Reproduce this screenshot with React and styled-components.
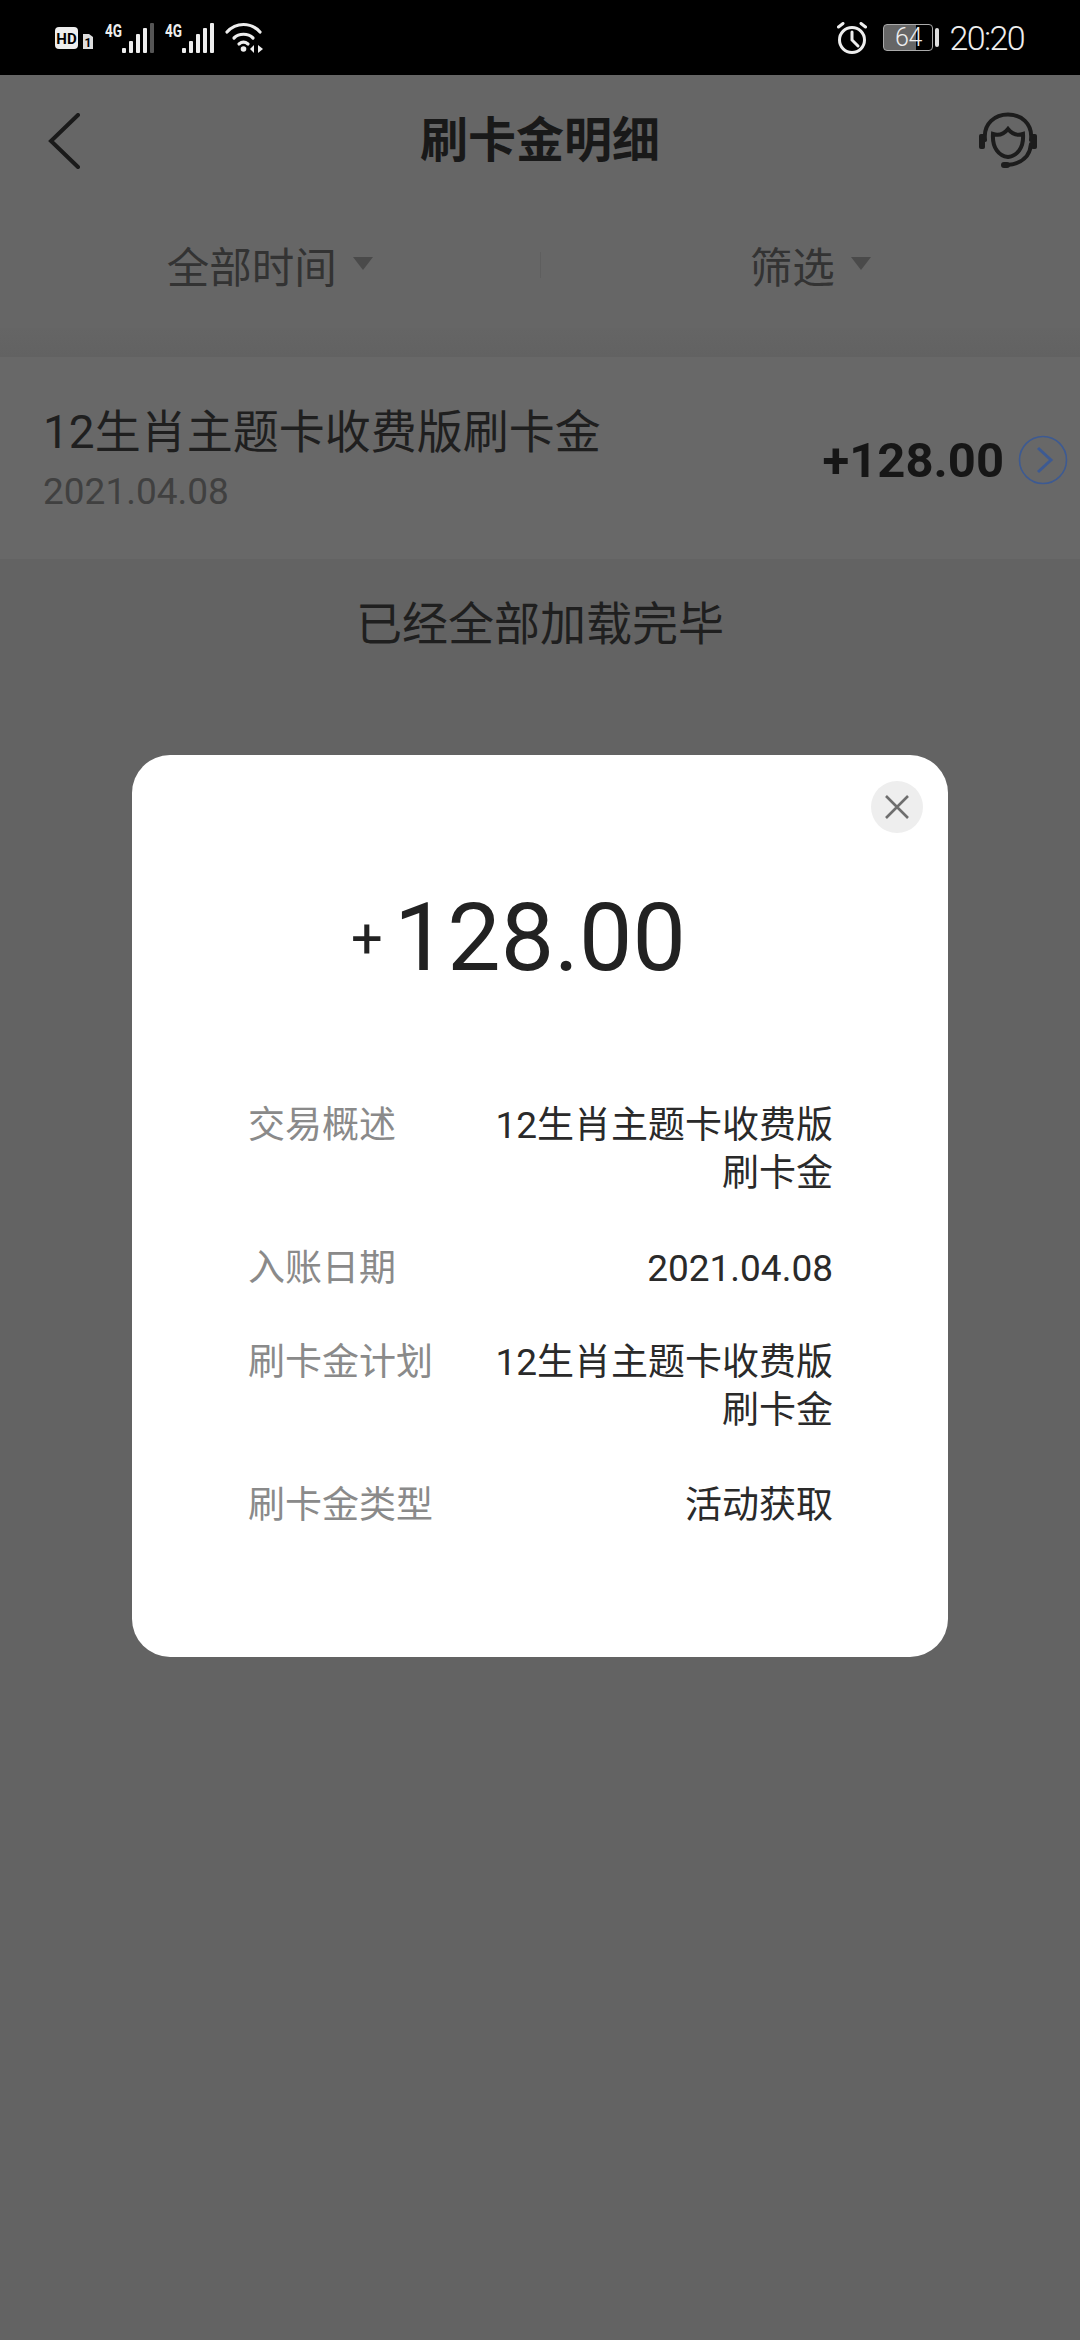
import React from 'react';
import styled, { createGlobalStyle } from 'styled-components';

const Global = createGlobalStyle`
  html, body { margin: 0; padding: 0; background: #636363; }
  * { box-sizing: border-box; }
  body { font-family: Roboto, "Noto Sans CJK SC", sans-serif; }
`;

const Page = styled.div`
  position: relative;
  width: 1080px;
  height: 2340px;
  overflow: hidden;
  background: #636363;
  display: flex;
  flex-direction: column;
`;

const StatusBar = styled.div`
  height: 75px;
  background: #000;
  color: #eee;
  display: flex;
  align-items: center;
  justify-content: space-between;
  padding: 0 56px 0 55px;
`;

const StatusGroup = styled.div`
  display: flex;
  align-items: center;
`;

const SignalGroup = styled(StatusGroup)`
  gap: 10px;
`;

const Clock = styled.span`
  font-size: 34px;
  font-weight: 300;
  letter-spacing: -1.6px;
  line-height: 1;
  margin-left: 10px;
  color: #eee;
`;

const Battery = styled.div`
  width: 50px;
  height: 27px;
  margin-left: 16px;
  border: 1.5px solid #aaa;
  border-radius: 4px;
  display: flex;
  align-items: center;
  justify-content: center;
  font-size: 25px;
  font-weight: 300;
  letter-spacing: -0.5px;
  color: #eee;
  background: linear-gradient(to right, #666 66%, transparent 66%);
`;

const BatteryCap = styled.div`
  width: 4px;
  height: 19px;
  margin-left: 2px;
  border-radius: 2px;
  background: #ddd;
`;

const Header = styled.div`
  height: 132px;
  background: #666;
  display: flex;
  align-items: center;
  justify-content: space-between;
  padding: 0 42px 0 48px;
`;

const Title = styled.h1`
  margin: 0;
  font-size: 48px;
  font-weight: 700;
  color: #191919;
  position: absolute;
  left: 0;
  right: 0;
  text-align: center;
  line-height: 132px;
  top: 75px;
`;

const Filters = styled.div`
  height: 121px;
  background: #666;
  display: flex;
  align-items: center;
  padding-bottom: 6px;
`;

const FilterCell = styled.div`
  flex: 1;
  display: flex;
  align-items: center;
  justify-content: center;
  gap: 16px;
  font-size: 42.5px;
  color: #333;
`;

const Caret = styled.span`
  width: 0;
  height: 0;
  margin-top: -2px;
  border-left: 10px solid transparent;
  border-right: 10px solid transparent;
  border-top: 13px solid #4a4a4a;
`;

const FilterDivider = styled.div`
  width: 1px;
  height: 26px;
  background: #5e5e5e;
`;

const Gap = styled.div`
  height: 29px;
  background: linear-gradient(#656565, #626262);
`;

const Record = styled.div`
  height: 202px;
  background: #686868;
  display: flex;
  align-items: center;
  justify-content: space-between;
  padding: 0 12px 0 43px;
`;

const RecordText = styled.div`
  display: flex;
  flex-direction: column;
  gap: 12px;
`;

const RecordName = styled.div`
  font-size: 46px;
  line-height: 56px;
  color: #1f1f1f;
`;

const RecordDate = styled.div`
  font-size: 37px;
  line-height: 40px;
  color: #404040;
`;

const RecordRight = styled.div`
  display: flex;
  align-items: center;
  gap: 14px;
  margin-top: 4px;
`;

const RecordAmount = styled.div`
  font-size: 49px;
  font-weight: 700;
  color: #161616;
`;

const EndNote = styled.div`
  text-align: center;
  font-size: 46px;
  line-height: 56px;
  margin-top: 37px;
  color: #1f1f1f;
`;

const Backdrop = styled.div`
  position: absolute;
  inset: 75px 0 0 0;
  display: flex;
  justify-content: center;
  padding-top: 680px;
`;

const Modal = styled.div`
  position: relative;
  width: 816px;
  height: 902px;
  background: #fff;
  border-radius: 38px;
  padding: 128px 115px 0 116px;
`;

const Close = styled.div`
  position: absolute;
  top: 26px;
  right: 25px;
  width: 52px;
  height: 52px;
  border-radius: 50%;
  background: #eee;
  display: flex;
  align-items: center;
  justify-content: center;
`;

const Amount = styled.div`
  display: flex;
  justify-content: center;
  align-items: baseline;
  gap: 11px;
  padding-right: 44px;
  color: #222;
  line-height: 110px;
`;

const Plus = styled.span`
  font-size: 56px;
  position: relative;
  top: -12px;
`;

const Number = styled.span`
  font-size: 95px;
  font-weight: 400;
`;

const Rows = styled.div`
  margin-top: 96px;
  display: flex;
  flex-direction: column;
  gap: 46.5px;
`;

const Row = styled.div`
  display: flex;
  justify-content: space-between;
  font-size: 37px;
  line-height: 48px;
`;

const RowLabel = styled.div`
  color: #8a8a8a;
`;

const RowValue = styled.div`
  color: #2a2a2a;
  text-align: right;
  width: 360px;
`;

const details = [
  { label: '交易概述', value: ['12生肖主题卡收费版', '刷卡金'] },
  { label: '入账日期', value: ['2021.04.08'] },
  { label: '刷卡金计划', value: ['12生肖主题卡收费版', '刷卡金'] },
  { label: '刷卡金类型', value: ['活动获取'] },
];

// small status bar drawings
const SimBadge = () => (
  <svg width="40" height="24" viewBox="0 0 40 24">
    <rect x="0" y="1" width="23" height="22" rx="4" fill="#eee" />
    <text x="11.5" y="17.5" fontSize="15" fontWeight="700" fontFamily="Roboto" textAnchor="middle" fill="#000">HD</text>
    <path d="M28 8h6l4 3v12H28z" fill="#ddd" />
    <text x="33" y="21" fontSize="12" fontWeight="700" fontFamily="Roboto" textAnchor="middle" fill="#000">1</text>
  </svg>
);

const barTops = [25, 18, 11, 5, 0];

// the viewBox leaves room above the bars so the 4G label keeps its ascent
const Signal = ({ dimLast }) => (
  <svg width="50" height="46" viewBox="0 -8 50 46">
    <text x="0" y="14" fontSize="19" fontWeight="700" fontFamily="Roboto" fill="#eee" textLength="17" lengthAdjust="spacingAndGlyphs">4G</text>
    {barTops.map((top, i) => (
      <rect
        key={top}
        x={17 + i * 7}
        y={top}
        width="4"
        height={30 - top}
        rx="1"
        fill={dimLast && i === 4 ? '#555' : '#eee'}
      />
    ))}
  </svg>
);

const Wifi = () => (
  <svg width="38" height="32" viewBox="0 0 38 32" fill="none" stroke="#eee" strokeWidth="3.2" strokeLinecap="round">
    <path d="M2 10C11 0 26 0 35 10" />
    <path d="M9 16c5-5 14-5 19 0" />
    <path d="M14 22c3-2.5 6-2.5 9 0" />
    <circle cx="18.5" cy="27" r="2.8" fill="#eee" stroke="none" />
    <path d="M29 23l-4 4 4 4zM33 23l5 4-5 4z" fill="#eee" stroke="none" />
  </svg>
);

const Alarm = () => (
  <svg width="30" height="32" viewBox="0 0 30 32" fill="none" stroke="#eee" strokeWidth="3" strokeLinecap="round">
    <circle cx="15" cy="18" r="12.5" />
    <path d="M15 10v8l6 6" />
    <path d="M1.5 5L6 1.5M28.5 5L24 1.5" />
  </svg>
);

const BackIcon = () => (
  <svg width="34" height="56" viewBox="0 0 34 56" fill="none" stroke="#1a1a1a" strokeWidth="4" strokeLinecap="round">
    <path d="M30 2L3 28l27 26" />
  </svg>
);

const ServiceIcon = () => (
  <svg width="60" height="58" viewBox="0 0 60 58" fill="none" stroke="#1c1c1c" strokeWidth="4" strokeLinecap="round">
    <path d="M7 28C3 -6 57 -6 53 28" />
    <path d="M15 22c6 2 11 0 15-5 4 5 9 7 15 5 1 14-6 22-15 23-9-1-16-9-15-23z" />
    <path d="M53 32c-1 12-9 20-24 21" />
    <rect x="1" y="22" width="6" height="15" rx="2" fill="#1c1c1c" stroke="none" />
    <rect x="53" y="22" width="6" height="15" rx="2" fill="#1c1c1c" stroke="none" />
    <rect x="23" y="50" width="9" height="6" rx="3" fill="#1c1c1c" stroke="none" />
  </svg>
);

const ArrowCircle = () => (
  <svg width="50" height="50" viewBox="0 0 50 50" fill="none" stroke="#3d5a92">
    <circle cx="25" cy="25" r="23.5" strokeWidth="1.6" />
    <path d="M20 13l13 12-13 12" strokeWidth="3" />
  </svg>
);

const CloseIcon = () => (
  <svg width="26" height="26" viewBox="0 0 26 26" fill="none" stroke="#6e6e6e" strokeWidth="2.6">
    <path d="M2 2l22 22M24 2L2 24" />
  </svg>
);

export default function App() {
  return (
    <Page>
      <Global />
      <StatusBar>
        <SignalGroup>
          <SimBadge />
          <Signal dimLast />
          <Signal />
          <Wifi />
        </SignalGroup>
        <StatusGroup>
          <Alarm />
          <Battery>64</Battery>
          <BatteryCap />
          <Clock>20:20</Clock>
        </StatusGroup>
      </StatusBar>
      <Header>
        <BackIcon />
        <ServiceIcon />
      </Header>
      <Title>刷卡金明细</Title>
      <Filters>
        <FilterCell>全部时间<Caret /></FilterCell>
        <FilterDivider />
        <FilterCell>筛选<Caret /></FilterCell>
      </Filters>
      <Gap />
      <Record>
        <RecordText>
          <RecordName>12生肖主题卡收费版刷卡金</RecordName>
          <RecordDate>2021.04.08</RecordDate>
        </RecordText>
        <RecordRight>
          <RecordAmount>+128.00</RecordAmount>
          <ArrowCircle />
        </RecordRight>
      </Record>
      <EndNote>已经全部加载完毕</EndNote>
      <Backdrop>
        <Modal>
          <Close><CloseIcon /></Close>
          <Amount>
            <Plus>+</Plus>
            <Number>128.00</Number>
          </Amount>
          <Rows>
            {details.map((d) => (
              <Row key={d.label}>
                <RowLabel>{d.label}</RowLabel>
                <RowValue>
                  {d.value.map((line) => (
                    <div key={line}>{line}</div>
                  ))}
                </RowValue>
              </Row>
            ))}
          </Rows>
        </Modal>
      </Backdrop>
    </Page>
  );
}
